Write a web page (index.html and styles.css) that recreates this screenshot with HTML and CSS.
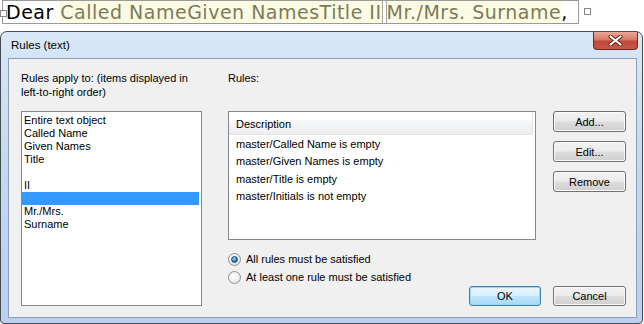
FILE: index.html
```html
<!DOCTYPE html>
<html>
<head>
<meta charset="utf-8">
<link rel="stylesheet" href="styles.css">
</head>
<body>
<div class="doc">
  <span class="handle handle-left"></span>
  <div class="docbox"><span class="plain">Dear&nbsp;</span><span class="field">Called NameGiven NamesTitle II</span><span class="sep"></span><span class="field">Mr./Mrs. Surname</span><span class="plain comma">,</span></div>
  <span class="handle handle-right"></span>
</div>
<div class="dialog">
  <div class="titlebar">
    <span class="title">Rules (text)</span>
    <span class="close"><svg width="17" height="11" viewBox="0 0 17 11"><path d="M3.5 1.5 L13.5 9.5 M13.5 1.5 L3.5 9.5" stroke="#5a2018" stroke-width="4" stroke-linecap="round"/><path d="M3.5 1.5 L13.5 9.5 M13.5 1.5 L3.5 9.5" stroke="#ffffff" stroke-width="2.2" stroke-linecap="round"/></svg></span>
  </div>
  <div class="client">
    <div class="left">
      <div class="label">Rules apply to: (items displayed in<br>left-to-right order)</div>
      <div class="listbox">
        <div class="item">Entire text object</div>
        <div class="item">Called Name</div>
        <div class="item">Given Names</div>
        <div class="item">Title</div>
        <div class="item"></div>
        <div class="item">II</div>
        <div class="item selected"></div>
        <div class="item">Mr./Mrs.</div>
        <div class="item">Surname</div>
      </div>
    </div>
    <div class="right">
      <div class="label">Rules:</div>
      <div class="rules-row">
        <div class="rulesbox">
          <div class="header">Description</div>
          <div class="rule">master/Called Name is empty</div>
          <div class="rule">master/Given Names is empty</div>
          <div class="rule">master/Title is empty</div>
          <div class="rule">master/Initials is not empty</div>
        </div>
        <div class="side-buttons">
          <button class="btn">Add...</button>
          <button class="btn">Edit...</button>
          <button class="btn">Remove</button>
        </div>
      </div>
      <div class="radios">
        <div class="radio-row"><span class="radio checked"></span><span>All rules must be satisfied</span></div>
        <div class="radio-row"><span class="radio"></span><span>At least one rule must be satisfied</span></div>
      </div>
      <div class="footer">
        <button class="btn btn-ok">OK</button>
        <button class="btn">Cancel</button>
      </div>
    </div>
  </div>
</div>
</body>
</html>
```
FILE: styles.css
```css
html, body {
  margin: 0;
  padding: 0;
  background: #ffffff;
}
body {
  width: 644px;
  height: 324px;
  overflow: hidden;
  font-family: "Liberation Sans", Arial, sans-serif;
  font-size: 11px;
  color: #000;
}
.doc {
  position: relative;
  height: 24px;
  padding-left: 2px;
}
.docbox {
  display: inline-flex;
  align-items: stretch;
  height: 22px;
  border: 1px solid #9a9a9a;
  padding: 0 10px 0 3px;
  font-family: "DejaVu Sans", Verdana, sans-serif;
  font-size: 19px;
  letter-spacing: 0.5px;
  line-height: 22px;
  white-space: nowrap;
}
.plain {
  color: #000;
}
.field {
  background: #fbfbe3;
  color: #7b7b5b;
}
.sep {
  width: 3px;
  border-left: 1px solid #a8a8a0;
  border-right: 1px solid #a8a8a0;
  background: #fff;
}
.handle {
  position: absolute;
  width: 5px;
  height: 5px;
  border: 1px solid #8a8a8a;
  background: #fff;
}
.handle-left {
  left: 0;
  top: 10px;
}
.handle-right {
  left: 584px;
  top: 8px;
}
.dialog {
  margin-top: 7px;
  width: 643px;
  height: 293px;
  box-sizing: border-box;
  border: 1px solid #464b52;
  border-radius: 7px 7px 4px 4px;
  background: linear-gradient(180deg, #dae8f7 0%, #c6daf0 40%, #b9d1ed 100%);
  display: flex;
  flex-direction: column;
}
.titlebar {
  height: 26px;
  flex: none;
  display: flex;
  align-items: flex-start;
  justify-content: space-between;
}
.title {
  font-size: 11.5px;
  margin: 7px 0 0 10px;
  color: #000;
}
.close {
  width: 45px;
  height: 18px;
  margin-right: 4px;
  box-sizing: border-box;
  border: 1px solid #6a2a22;
  border-top: none;
  border-radius: 0 0 4px 4px;
  background: linear-gradient(180deg, #e9a898 0%, #d7786a 45%, #c4483a 55%, #c7574a 100%);
  display: flex;
  align-items: center;
  justify-content: center;
}
.client {
  flex: 1;
  margin: 0 5px 5px 7px;
  border: 1px solid #8da0b6;
  background: #f0f0f0;
  padding: 12px 8px 0 12px;
  display: flex;
  gap: 26px;
}
.label {
  height: 40px;
  line-height: 14px;
}
.left {
  width: 181px;
  flex: none;
}
.listbox {
  height: 195px;
  box-sizing: border-box;
  border: 1px solid #828790;
  background: #fff;
  padding: 2px 2px 0 0;
}
.item {
  height: 13px;
  line-height: 13px;
  padding-left: 2px;
}
.item.selected {
  background: #3399ff;
}
.right {
  flex: none;
  width: 398px;
  display: flex;
  flex-direction: column;
}
.rules-row {
  display: flex;
  gap: 17px;
}
.rulesbox {
  width: 308px;
  height: 129px;
  box-sizing: border-box;
  border: 1px solid #828790;
  background: #fff;
  padding: 0 2px 0 0;
}
.header {
  height: 23px;
  line-height: 25px;
  box-sizing: border-box;
  padding-left: 7px;
  border-right: 1px solid #e2e3e5;
  background: linear-gradient(180deg, #ffffff 0%, #ffffff 35%, #f6f7f8 40%, #eceeef 100%);
  border-bottom: 1px solid #e5e5e5;
}
.rule {
  height: 17.4px;
  line-height: 18px;
  padding-left: 7px;
}
.side-buttons {
  display: flex;
  flex-direction: column;
  gap: 9px;
}
.btn {
  width: 73px;
  height: 21px;
  box-sizing: border-box;
  border: 1px solid #707070;
  border-radius: 3px;
  background: linear-gradient(180deg, #f2f2f2 0%, #ebebeb 48%, #dddddd 52%, #cfcfcf 100%);
  box-shadow: inset 0 0 0 1px #fbfbfb;
  font-family: "Liberation Sans", Arial, sans-serif;
  font-size: 11px;
  color: #000;
  padding: 0;
  margin: 0;
}
.radios {
  margin-top: 10px;
}
.radio-row {
  height: 18px;
  display: flex;
  align-items: center;
  gap: 5px;
}
.radio {
  width: 13px;
  height: 13px;
  box-sizing: border-box;
  border-radius: 50%;
  border: 1px solid #8e8f8f;
  background: radial-gradient(circle at 40% 40%, #ffffff 0%, #f0f0f0 50%, #d6d6d6 100%);
  display: flex;
  align-items: center;
  justify-content: center;
}
.radio.checked::after {
  content: "";
  width: 5px;
  height: 5px;
  border-radius: 50%;
  background: radial-gradient(circle at 40% 35%, #a9dbf6 0%, #2f7bc2 55%, #174f86 100%);
  border: 1px solid #1a4d7e;
}
.footer {
  display: flex;
  justify-content: flex-end;
  gap: 12px;
}
.footer .btn {
  height: 20px;
}
.btn-ok {
  width: 72px;
  border-color: #3c7fb1;
  background: linear-gradient(180deg, #eaf6fd 0%, #d9f0fc 48%, #bee6fd 52%, #a7d9f5 100%);
  box-shadow: inset 0 0 0 1px #9fdaf6;
}
```
